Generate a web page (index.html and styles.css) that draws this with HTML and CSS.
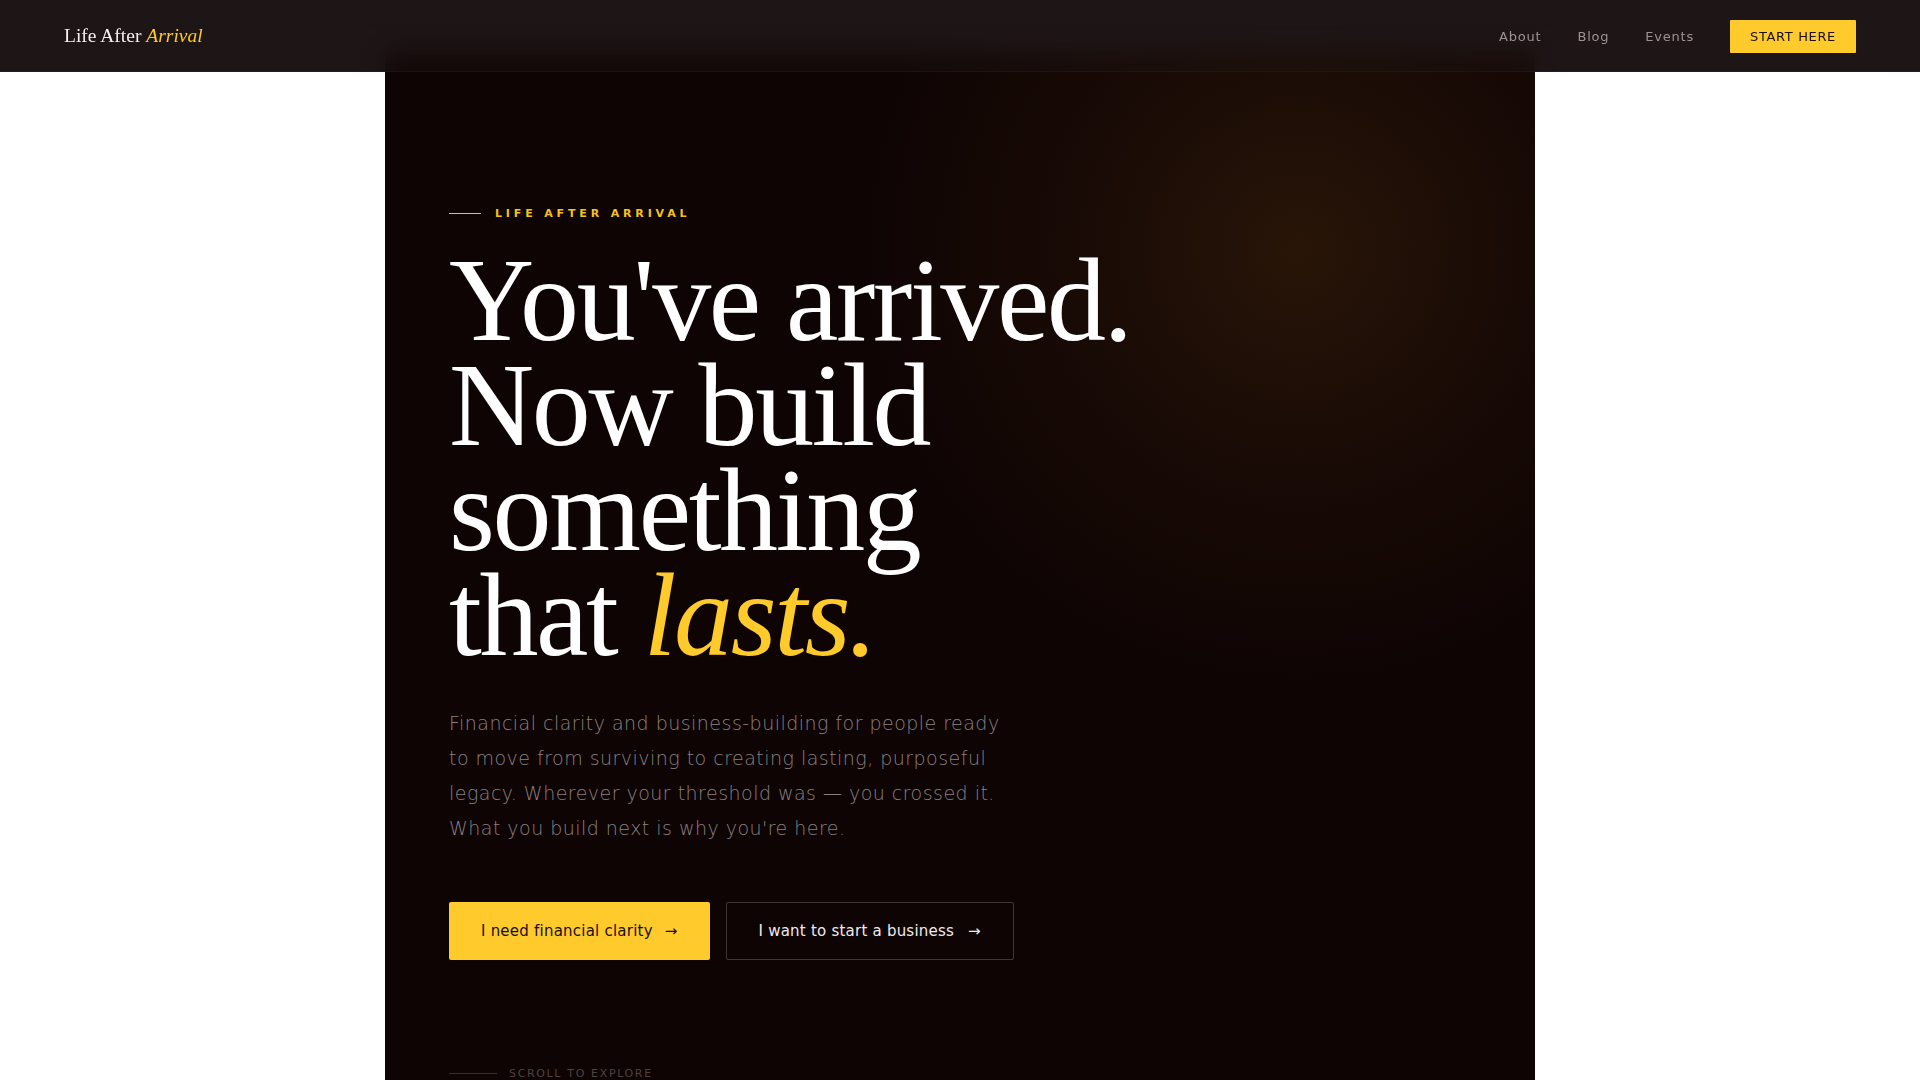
FILE: index.html
```html
<!DOCTYPE html>
<html lang="en">
<head>
<meta charset="utf-8">
<title>Life After Arrival</title>
<link rel="stylesheet" href="styles.css">
</head>
<body>
<header class="site-header">
  <a class="logo" href="#">Life After <em>Arrival</em></a>
  <nav class="nav">
    <a class="nav-link" href="#">About</a>
    <a class="nav-link" href="#">Blog</a>
    <a class="nav-link" href="#">Events</a>
    <a class="nav-cta" href="#">START HERE</a>
  </nav>
</header>
<main class="hero">
  <div class="hero-inner">
    <div class="eyebrow"><span class="eyebrow-line"></span><span>LIFE AFTER ARRIVAL</span></div>
    <h1 class="headline">You've arrived.<br>Now build<br>something<br>that <em>lasts.</em></h1>
    <p class="lead">Financial clarity and business-building for people ready to move from surviving to creating lasting, purposeful legacy. Wherever your threshold was — you crossed it. What you build next is why you're here.</p>
    <div class="actions">
      <a class="btn btn-primary" href="#"><span>I need financial clarity</span><span class="arrow">→</span></a>
      <a class="btn btn-ghost" href="#"><span>I want to start a business</span><span class="arrow">→</span></a>
    </div>
    <div class="scroll"><span class="scroll-line"></span><span>SCROLL TO EXPLORE</span></div>
  </div>
</main>
</body>
</html>
```

FILE: styles.css
```css
* { box-sizing: border-box; }
html, body { margin: 0; padding: 0; }
body {
  background: linear-gradient(to bottom, #1e1616 0, #1e1616 72px, #ffffff 72px);
  font-family: "DejaVu Sans", sans-serif;
  min-height: 100vh;
}
a { text-decoration: none; }

.site-header {
  position: fixed;
  top: 0; left: 0; right: 0;
  height: 72px;
  z-index: 10;
  display: flex;
  align-items: center;
  justify-content: space-between;
  padding: 1px 64px 0;
  background: rgba(30, 22, 22, 0.25);
  backdrop-filter: blur(14px);
  border-bottom: 1px solid rgba(255, 255, 255, 0.04);
}
.logo {
  font-family: "Liberation Serif", serif;
  font-size: 19.5px;
  color: #f4f0ee;
}
.logo em { color: #ffc928; font-style: italic; }
.nav { display: flex; align-items: center; gap: 36px; }
.nav-link {
  font-size: 13px;
  letter-spacing: 0.06em;
  color: #9c9292;
}
.nav-cta {
  display: flex;
  align-items: center;
  height: 33px;
  padding: 0 20px;
  background: #ffca2b;
  color: #1a0e0e;
  font-size: 13px;
  letter-spacing: 0.05em;
  border-radius: 1px;
}

.hero {
  max-width: 1150px;
  margin: 50px auto 0;
  background:
    radial-gradient(circle at 913px 200px, rgba(190, 120, 30, 0.15) 0, rgba(170, 100, 25, 0.07) 210px, rgba(150, 90, 20, 0) 450px),
    #0e0404;
  min-height: 1100px;
}
.hero-inner {
  padding: 157px 64px 80px;
}
.eyebrow {
  display: flex;
  align-items: center;
  gap: 14px;
  font-size: 11px;
  line-height: 13px;
  font-weight: bold;
  letter-spacing: 0.35em;
  color: #f5c21b;
}
.eyebrow-line { width: 32px; height: 1px; background: #f5c21b; }
.headline {
  margin: 28px 0 0;
  font-family: "Liberation Serif", serif;
  font-weight: 400;
  font-size: 118px;
  line-height: 105px;
  letter-spacing: -0.02em;
  color: #ffffff;
}
.headline em { color: #ffca2b; font-style: italic; }
.lead {
  margin: 37.5px 0 0;
  max-width: 570px;
  font-size: 19px;
  line-height: 35px;
  letter-spacing: 0.025em;
  font-weight: 300;
  color: #8a8080;
}
.actions {
  display: flex;
  gap: 16px;
  margin-top: 56px;
}
.btn {
  display: inline-flex;
  align-items: center;
  gap: 12px;
  height: 58px;
  padding: 0 32px;
  font-size: 15px;
  letter-spacing: 0.015em;
  border-radius: 2px;
}
.btn-primary { background: #ffca2b; color: #1a0e0e; }
.btn-ghost {
  border: 1px solid rgba(255, 255, 255, 0.2);
  color: #f0eaea;
}
.btn-ghost .arrow { margin-left: 2px; }
.arrow { font-size: 15px; }
.scroll {
  display: flex;
  align-items: center;
  gap: 12px;
  margin-top: 107.5px;
  font-size: 11px;
  line-height: 13px;
  letter-spacing: 0.15em;
  color: #4d4242;
}
.scroll-line { width: 48px; height: 1px; background: #3a3030; }
```
